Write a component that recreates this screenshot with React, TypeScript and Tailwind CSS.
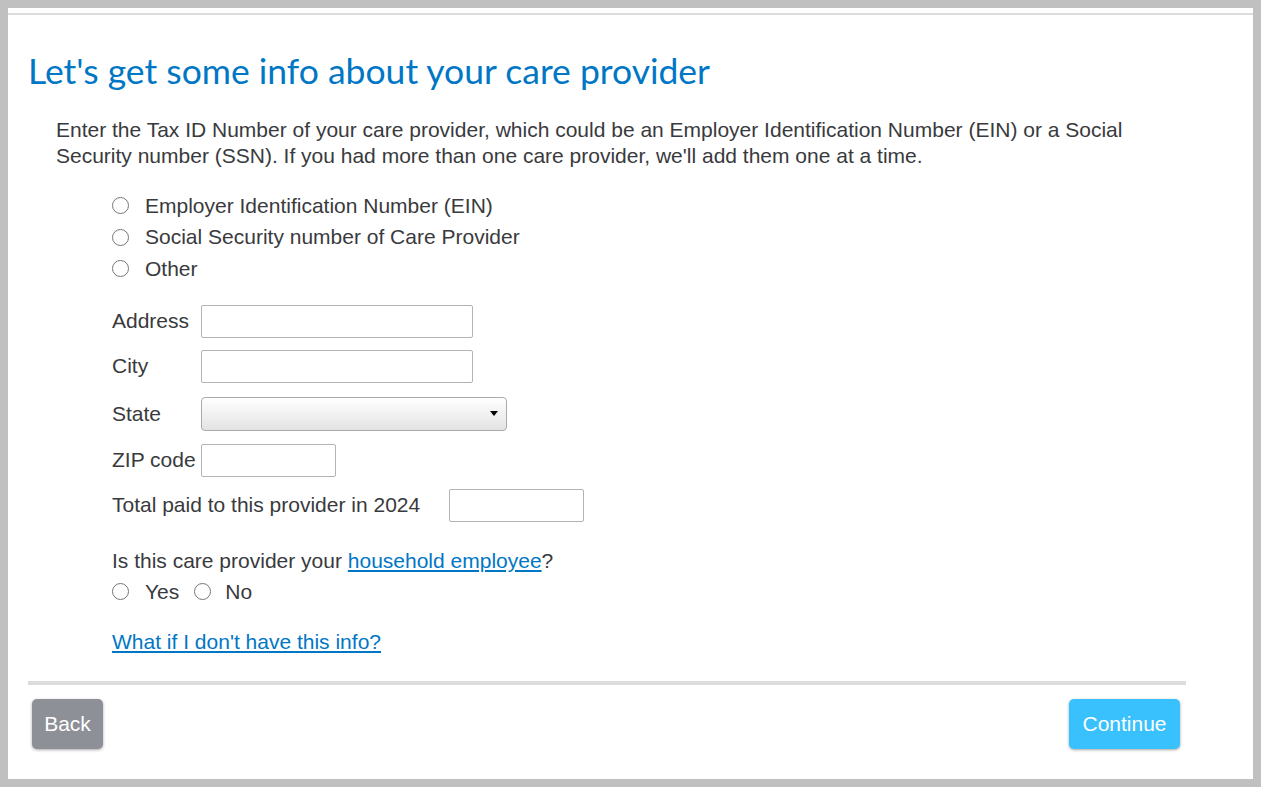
import React from 'react';

const Radio = () => (
  <span className="inline-block w-[17px] h-[17px] rounded-full border border-[#767676] bg-white shrink-0" />
);

const TextInput = ({ width }: { width: string }) => (
  <div className={`${width} h-[33px] rounded-[2px] border border-[#b3b3b3] bg-white`} />
);

export default function App() {
  const radios = [
    'Employer Identification Number (EIN)',
    'Social Security number of Care Provider',
    'Other',
  ];

  return (
    <div
      className="w-[1261px] h-[787px] border-8 border-[#c0c0c0] bg-white text-[21px] leading-[26px] text-[#393a3d] flex flex-col"
      style={{ fontFamily: '"Liberation Sans", Arial, sans-serif' }}
    >
      <div className="mt-[5px] h-[2px] bg-[#dcdcdc]" />

      <div className="pl-[20px] pr-[67px] flex flex-col">
        <h1
          className="mt-[36px] h-[40px] leading-[40px] text-[35.5px] text-[#0077c5] font-normal"
          style={{ fontFamily: 'Lato, "Noto Sans", sans-serif' }}
        >
          Let's get some info about your care provider
        </h1>

        <p className="mt-[26px] pl-[28px] leading-[26px]">
          Enter the Tax ID Number of your care provider, which could be an Employer Identification Number (EIN) or a Social
          Security number (SSN). If you had more than one care provider, we'll add them one at a time.
        </p>

        <div className="pl-[84px] flex flex-col">
          <div className="mt-[21px] flex flex-col">
            {radios.map((r) => (
              <label key={r} className="h-[31.5px] flex items-center gap-[16px]">
                <Radio />
                <span>{r}</span>
              </label>
            ))}
          </div>

          <div className="mt-[20px] flex items-center">
            <span className="w-[89px]">Address</span>
            <TextInput width="w-[272px]" />
          </div>
          <div className="mt-[12px] flex items-center">
            <span className="w-[89px]">City</span>
            <TextInput width="w-[272px]" />
          </div>
          <div className="mt-[14px] flex items-center">
            <span className="w-[89px]">State</span>
            <div className="w-[306px] h-[34px] rounded-[4px] border border-[#aaaaaa] bg-gradient-to-b from-white to-[#e3e3e3] flex items-center justify-end pr-[8px]">
              <span className="w-0 h-0 border-l-[4px] border-r-[4px] border-t-[5px] border-l-transparent border-r-transparent border-t-black" />
            </div>
          </div>
          <div className="mt-[13px] flex items-center">
            <span className="w-[89px]">ZIP code</span>
            <TextInput width="w-[135px]" />
          </div>
          <div className="mt-[12px] flex items-center">
            <span className="w-[337px]">Total paid to this provider in 2024</span>
            <TextInput width="w-[135px]" />
          </div>

          <p className="mt-[26px] leading-[26px]">
            Is this care provider your{' '}
            <a href="#" className="text-[#0077c5] underline">household employee</a>?
          </p>
          <div className="mt-[2px] h-[32px] flex items-center">
            <label className="flex items-center gap-[16px]">
              <Radio />
              <span>Yes</span>
            </label>
            <label className="ml-[15px] flex items-center gap-[14px]">
              <Radio />
              <span>No</span>
            </label>
          </div>

          <a href="#" className="mt-[21px] leading-[26px] text-[#0077c5] underline self-start">
            What if I don't have this info?
          </a>
        </div>

        <div className="mt-[26px] h-[4px] bg-[#dcdcdc]" />

        <div className="mt-[14px] flex justify-between pl-[4px] pr-[6px]">
          <button className="w-[71px] h-[50px] rounded-[5px] bg-[#8d9096] text-white text-[21px] shadow-[0_1px_3px_rgba(0,0,0,0.35)]">
            Back
          </button>
          <button className="w-[111px] h-[50px] rounded-[5px] bg-[#38c1fd] text-white text-[21px] shadow-[0_1px_3px_rgba(0,0,0,0.35)]">
            Continue
          </button>
        </div>
      </div>
    </div>
  );
}
